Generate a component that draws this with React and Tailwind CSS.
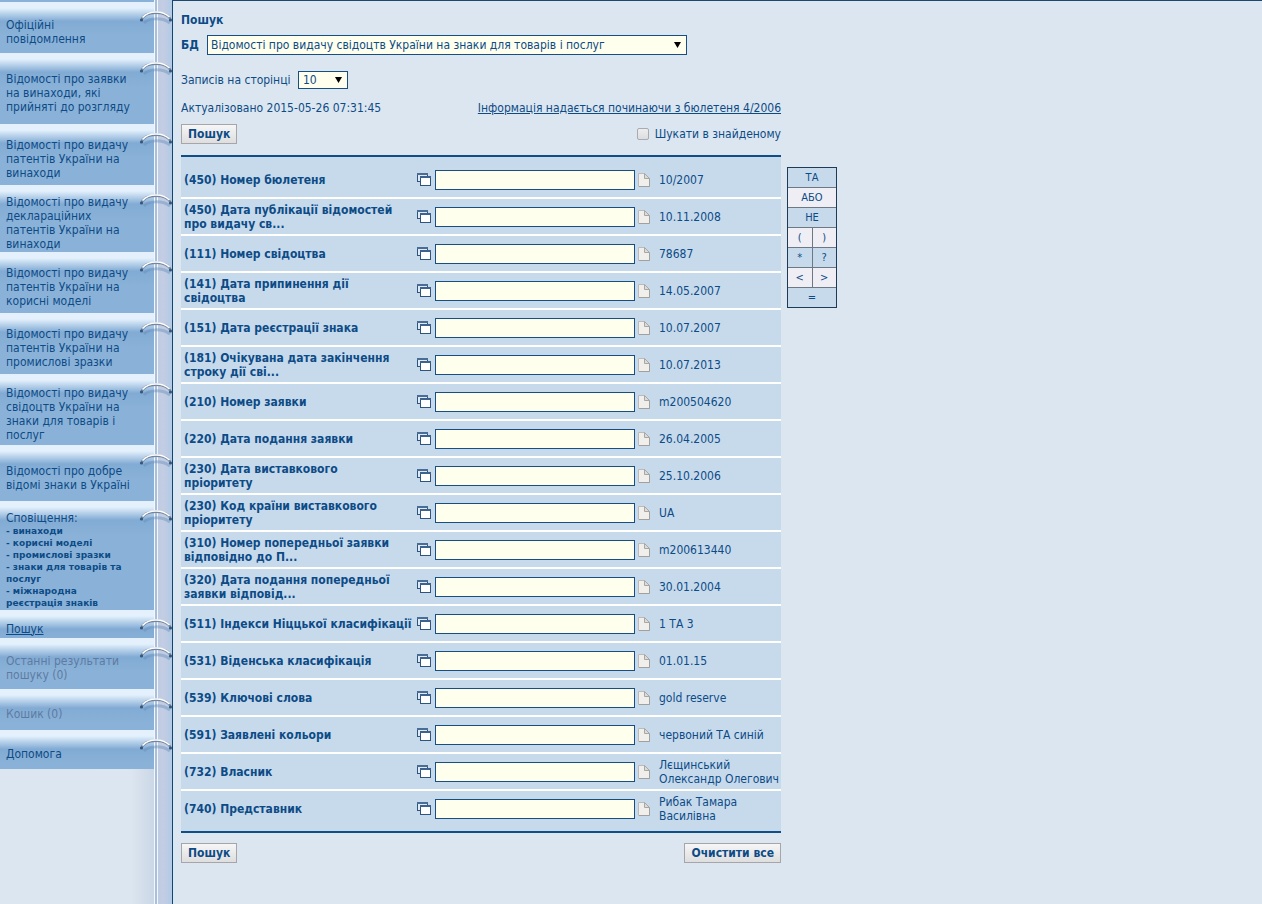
import React, { useState } from "react";

const menu = [
  { text: "Офіційні повідомлення", size: "min-h-[51px]" },
  { text: "Відомості про заявки на винаходи, які прийняті до розгляду", size: "min-h-[71px]" },
  { text: "Відомості про видачу патентів України на винаходи", size: "min-h-[61px]" },
  { text: "Відомості про видачу деклараційних патентів України на винаходи", size: "min-h-[67px]" },
  { text: "Відомості про видачу патентів України на корисні моделі", size: "min-h-[61px]" },
  { text: "Відомості про видачу патентів України на промислові зразки", size: "min-h-[61px]" },
  { text: "Відомості про видачу свідоцтв України на знаки для товарів і послуг", size: "min-h-[71px]" },
  { text: "Відомості про добре відомі знаки в Україні", size: "min-h-[56px]" },
  {
    text: "Сповіщення:",
    size: "min-h-[109px]",
    sub: ["винаходи", "корисні моделі", "промислові зразки", "знаки для товарів та послуг", "міжнародна реєстрація знаків"],
  },
  { text: "Пошук", size: "min-h-[28px]", current: true },
  { text: "Останні результати пошуку (0)", size: "min-h-[51px]", disabled: true },
  { text: "Кошик (0)", size: "min-h-[41px]", disabled: true },
  { text: "Допомога", size: "min-h-[39px]" },
];

const fields = [
  { label: "(450) Номер бюлетеня", hint: "10/2007" },
  { label: "(450) Дата публікації відомостей про видачу св...", hint: "10.11.2008" },
  { label: "(111) Номер свідоцтва", hint: "78687" },
  { label: "(141) Дата припинення дії свідоцтва", hint: "14.05.2007" },
  { label: "(151) Дата реєстрації знака", hint: "10.07.2007" },
  { label: "(181) Очікувана дата закінчення строку дії сві...", hint: "10.07.2013" },
  { label: "(210) Номер заявки", hint: "m200504620" },
  { label: "(220) Дата подання заявки", hint: "26.04.2005" },
  { label: "(230) Дата виставкового пріоритету", hint: "25.10.2006" },
  { label: "(230) Код країни виставкового пріоритету", hint: "UA" },
  { label: "(310) Номер попередньої заявки відповідно до П...", hint: "m200613440" },
  { label: "(320) Дата подання попередньої заявки відповід...", hint: "30.01.2004" },
  { label: "(511) Індекси Ніццької класифікації", hint: "1 ТА 3", oneLine: true },
  { label: "(531) Віденська класифікація", hint: "01.01.15" },
  { label: "(539) Ключові слова", hint: "gold reserve" },
  { label: "(591) Заявлені кольори", hint: "червоний ТА синій" },
  { label: "(732) Власник", hint: "Лєщинський Олександр Олегович" },
  { label: "(740) Представник", hint: "Рибак Тамара Василівна" },
];

const operators = [["ТА"], ["АБО"], ["НЕ"], ["(", ")"], ["*", "?"], ["<", ">"], ["="]];

const Ring = () => (
  <svg className="absolute left-[138px] top-[7px] z-10" width="36" height="18" viewBox="0 0 36 18" fill="none">
    <path d="M6 14C10 9 24 8 32 14" stroke="#5f86b4" strokeOpacity="0.4" strokeWidth="3" />
    <path d="M3.500 10.500C6 5.500 12 3.800 18 3.800S30 5.500 32.500 10" stroke="#74869f" strokeWidth="2.400" />
    <path d="M4.500 8.500C8 4.500 12 3 18 3S28 4.500 31.500 8" stroke="#fff" strokeWidth="1.600" />
    <circle cx="3.500" cy="11" r="1.600" fill="#33587f" />
    <circle cx="32.500" cy="11" r="1.600" fill="#33587f" />
  </svg>
);

const WindowsIcon = () => (
  <svg width="14" height="13" viewBox="0 0 14 13" shapeRendering="crispEdges">
    <rect x="0.5" y="0.5" width="10" height="8" fill="#dfeaf6" stroke="#2f557f" />
    <rect x="0" y="0" width="11" height="2" fill="#4a6d96" />
    <rect x="3.5" y="3.5" width="10" height="9" fill="#fff" stroke="#2f557f" />
    <rect x="3" y="3" width="11" height="2" fill="#3d628d" />
  </svg>
);

const PageIcon = () => (
  <svg width="12" height="14" viewBox="0 0 12 14" fill="none">
    <path d="M0.500 0.500H6.500L11.500 5.500V13.500H0.500Z" fill="#f1efec" stroke="#bdbbb9" />
    <path d="M11.500 5.500V13.500H1" stroke="#a29f9d" />
    <path d="M6.500 0.500V5.500H11.500Z" fill="#dddbd8" stroke="#a9a6a4" />
  </svg>
);

const Arrow = () => (
  <svg className="absolute right-[6px] top-1/2 -translate-y-1/2 pointer-events-none" width="7" height="6" viewBox="0 0 7 6">
    <path d="M0 0H7L3.500 6Z" fill="#000" />
  </svg>
);

const Button = ({ children, ...props }) => (
  <button
    className="h-[20px] px-[6px] border border-[#a5a5aa] bg-linear-to-b from-[#f6f6f6] to-[#dedede] font-bold leading-[16px] whitespace-nowrap"
    {...props}
  >
    {children}
  </button>
);

const MenuItem = ({ item }) => {
  let color = "text-[#0d4b86]";
  if (item.disabled) color = "text-[#5d7ba2]";
  if (item.current) color = "text-[#0d4b86] underline";

  return (
    <li
      className={`relative flex items-center pt-[9px] pl-[6px] pr-[24px] bg-linear-to-b from-[#e4f1fc] from-[6px] via-[#82abd4] via-[19px] to-[#8ab2d8] to-[34px] ${item.size}`}
    >
      <Ring />
      <div>
        <a href="#" className={`block ${color}`}>{item.text}</a>
        {item.sub && (
          <ul className="font-['DejaVu_Sans',sans-serif] text-[9px] leading-[12px] font-bold text-[#0d4b86]">
            {item.sub.map((s) => (
              <li key={s}>
                <a href="#" className="block">{`- ${s}`}</a>
              </li>
            ))}
          </ul>
        )}
      </div>
    </li>
  );
};

const FieldRow = ({ field, index, value, onChange }) => (
  <div className="flex items-center h-[35px] bg-[#c6daec]">
    <label htmlFor={`field-${index}`} className="w-[236px] shrink-0 pl-[3px] font-bold">
      <span className={`block max-w-[220px] ${field.oneLine ? "whitespace-nowrap" : ""}`}>{field.label}</span>
    </label>
    <button type="button" aria-label="Словник" className="shrink-0">
      <WindowsIcon />
    </button>
    <input
      id={`field-${index}`}
      type="text"
      value={value}
      onChange={onChange}
      className="w-[200px] h-[20px] ml-[4px] px-1 shrink-0 border border-[#174f82] bg-[#ffffee]"
    />
    <button type="button" aria-label="Приклад" className="ml-[3px] shrink-0">
      <PageIcon />
    </button>
    <span className="ml-[9px]">{field.hint}</span>
  </div>
);

export default function App() {
  const [values, setValues] = useState({});
  const [active, setActive] = useState(0);

  const insertOperator = (op) => {
    setValues({ ...values, [active]: `${values[active] || ""}${op} ` });
  };

  return (
    <div className="flex min-h-screen bg-[#dce6f0] font-['DejaVu_Sans_Condensed','DejaVu_Sans',sans-serif] text-[12px] leading-[14px] text-[#0d4b86]">
      {/* Side menu */}
      <nav className="w-[154px] shrink-0 bg-linear-to-r from-[#dce6f0] from-85% to-[#cbd7e6]">
        <ul className="pt-[2px] bg-[#8ab2d8]">
          {menu.map((item) => (
            <MenuItem key={item.text} item={item} />
          ))}
        </ul>
      </nav>

      {/* Binder spine */}
      <div className="w-[19px] shrink-0 flex border-r border-[#0f4577] bg-linear-to-r from-[#bccbe2] via-[#c3cde3] to-[#b3cae6]">
        <div className="w-[4px] border-x border-[#f3f7fc] bg-[#a9c0dd]" />
      </div>

      <main className="flex-1 min-w-0 border-t border-[#1c476f] pl-[8px]">
        <form onSubmit={(e) => e.preventDefault()}>
          <h1 className="pt-[12px] font-bold">Пошук</h1>
          <div className="flex items-center mt-[8px]">
            <label htmlFor="db" className="w-[26px] font-bold">БД</label>
            <div className="relative w-[480px]">
              <select id="db" className="block w-full h-[20px] pl-[3px] appearance-none border border-[#174f82] bg-[#ffffee]">
                <option>Відомості про видачу свідоцтв України на знаки для товарів і послуг</option>
              </select>
              <Arrow />
            </div>
          </div>
          <div className="flex items-center mt-[16px]">
            <label htmlFor="per-page" className="w-[117px]">Записів на сторінці</label>
            <div className="relative w-[50px]">
              <select id="per-page" defaultValue="10" className="block w-full h-[18px] pl-[4px] appearance-none border border-[#174f82] bg-[#ffffee]">
                <option>10</option>
                <option>20</option>
                <option>50</option>
              </select>
              <Arrow />
            </div>
          </div>

          <div className="w-[600px]">
            <div className="flex justify-between mt-[12px]">
              <span>Актуалізовано 2015-05-26 07:31:45</span>
              <a href="#" className="underline">Інформація надається починаючи з бюлетеня 4/2006</a>
            </div>
            <div className="flex justify-between items-center mt-[9px]">
              <Button type="submit">Пошук</Button>
              <label className="flex items-center gap-[6px]">
                <input
                  type="checkbox"
                  className="size-[12px] appearance-none rounded-[2px] border border-[#a9abb0] bg-linear-to-b from-[#ededef] to-[#dcdde0] checked:bg-[#174f82]"
                />
                Шукати в знайденому
              </label>
            </div>
          </div>

          <div className="flex items-start mt-[11px]">
            <div className="w-[600px] shrink-0">
              <div className="border-y-2 border-[#0f4f88] bg-[#c6daec] py-[5px]">
                <div className="flex flex-col gap-[2px] bg-white">
                  {fields.map((field, i) => (
                    <div key={field.label} onFocus={() => setActive(i)}>
                      <FieldRow
                        field={field}
                        index={i}
                        value={values[i] || ""}
                        onChange={(e) => setValues({ ...values, [i]: e.target.value })}
                      />
                    </div>
                  ))}
                </div>
              </div>
              <div className="flex justify-between mt-[10px]">
                <Button type="submit">Пошук</Button>
                <Button type="button" onClick={() => setValues({})}>Очистити все</Button>
              </div>
            </div>

            {/* Operators */}
            <div className="w-[50px] mt-[12px] ml-[6px] border border-[#1d3a57] divide-y divide-[#6d7885] text-[11px]">
              {operators.map((row, i) => (
                <div key={row[0]} className={`flex divide-x divide-[#6d7885] ${i % 2 ? "bg-[#eeeef4]" : "bg-[#c6daec]"}`}>
                  {row.map((op) => (
                    <button key={op} type="button" className="flex-1 h-[19px]" onClick={() => insertOperator(op)}>
                      {op}
                    </button>
                  ))}
                </div>
              ))}
            </div>
          </div>
        </form>
      </main>
    </div>
  );
}
